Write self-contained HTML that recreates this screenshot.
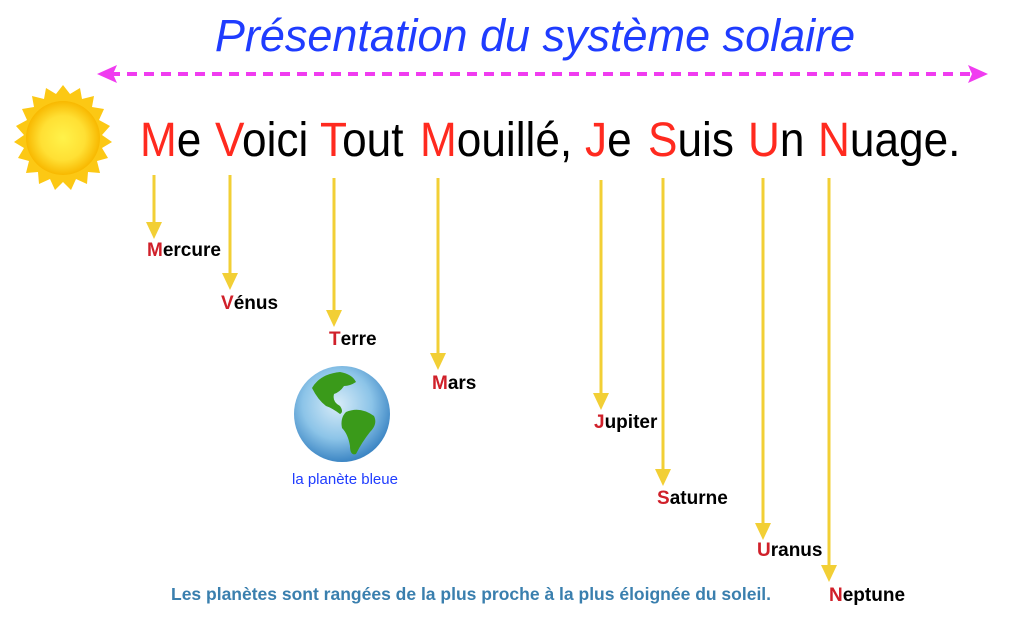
<!DOCTYPE html>
<html><head><meta charset="utf-8"><style>
body{margin:0;width:1013px;height:621px;background:#fff;position:relative;overflow:hidden;font-family:"Liberation Sans",sans-serif}
.a{position:absolute;white-space:nowrap}
.t{top:10px;left:0;width:1070px;text-align:center;font-style:italic;font-size:45px;color:#1f3cff}
.w{top:111px;font-size:48px;color:#000;line-height:60px;transform:scaleX(0.92);transform-origin:left}
.w b{font-weight:normal;color:#ff2a1f}
.p{font-size:19px;font-weight:bold;color:#000;line-height:20px}
.p b{color:#d0202a}
</style></head><body>
<div class="a t">Présentation du système solaire</div>
<svg class="a" style="left:0;top:0" width="1013" height="621">
<defs>
<radialGradient id="sg" cx="50%" cy="50%" r="50%"><stop offset="0" stop-color="#fff24a"/><stop offset="0.6" stop-color="#ffe034"/><stop offset="1" stop-color="#f8b800"/></radialGradient>
<radialGradient id="eg" cx="45%" cy="40%" r="60%"><stop offset="0" stop-color="#d8ecf8"/><stop offset="0.6" stop-color="#8cc4e8"/><stop offset="1" stop-color="#3d86c4"/></radialGradient>
</defs>
<line x1="110" y1="74" x2="975" y2="74" stroke="#f03cf0" stroke-width="4" stroke-dasharray="10,7"/>
<polygon points="97,74 117,65 113,74 117,83" fill="#f03cf0"/>
<polygon points="988,74 968,65 972,74 968,83" fill="#f03cf0"/>
<g transform="translate(63,138)">
<polygon fill="#fcc814" points="0,-53 7,-44 17,-50 19,-39 31,-42 29,-31 41,-29 36,-18 47,-12 39,-3 49,4 39,10 45,20 34,23 37,35 25,34 24,46 13,41 8,52 0,44 -8,52 -13,41 -24,46 -25,34 -37,35 -34,23 -45,20 -39,10 -49,4 -39,-3 -47,-12 -36,-18 -41,-29 -29,-31 -31,-42 -19,-39 -17,-50 -7,-44"/>
<circle r="37" fill="url(#sg)"/>
</g>
<g stroke="#f2cf35" stroke-width="3" fill="#f2cf35">
<line x1="154" y1="175" x2="154" y2="225"/><polygon stroke="none" points="146,222 162,222 154,239"/>
<line x1="230" y1="175" x2="230" y2="276"/><polygon stroke="none" points="222,273 238,273 230,290"/>
<line x1="334" y1="178" x2="334" y2="313"/><polygon stroke="none" points="326,310 342,310 334,327"/>
<line x1="438" y1="178" x2="438" y2="356"/><polygon stroke="none" points="430,353 446,353 438,370"/>
<line x1="601" y1="180" x2="601" y2="396"/><polygon stroke="none" points="593,393 609,393 601,410"/>
<line x1="663" y1="178" x2="663" y2="472"/><polygon stroke="none" points="655,469 671,469 663,486"/>
<line x1="763" y1="178" x2="763" y2="526"/><polygon stroke="none" points="755,523 771,523 763,540"/>
<line x1="829" y1="178" x2="829" y2="568"/><polygon stroke="none" points="821,565 837,565 829,582"/>
</g>
<circle cx="342" cy="414" r="48" fill="url(#eg)"/>
<path d="M312,388 q8,-14 28,-16 q12,2 16,10 q-6,4 -12,4 q-4,6 -10,8 q-2,8 6,12 q4,6 0,8 q-8,-6 -14,-8 q-8,-6 -14,-18z" fill="#3a9a1a"/>
<path d="M346,412 q14,-6 28,4 q4,8 -4,16 q-8,10 -14,22 q-6,2 -6,-8 q-2,-12 -8,-18 q-2,-10 4,-16z" fill="#3a9a1a"/>
</svg>
<div class="a w" style="left:140px"><b>M</b>e</div>
<div class="a w" style="left:215px"><b>V</b>oici</div>
<div class="a w" style="left:320px"><b>T</b>out</div>
<div class="a w" style="left:420px"><b>M</b>ouillé,</div>
<div class="a w" style="left:585px"><b>J</b>e</div>
<div class="a w" style="left:648px"><b>S</b>uis</div>
<div class="a w" style="left:748px"><b>U</b>n</div>
<div class="a w" style="left:818px"><b>N</b>uage.</div>
<div class="a p" style="left:147px;top:241px"><b>M</b>ercure</div>
<div class="a p" style="left:221px;top:294px"><b>V</b>énus</div>
<div class="a p" style="left:329px;top:330px"><b>T</b>erre</div>
<div class="a p" style="left:432px;top:374px"><b>M</b>ars</div>
<div class="a p" style="left:594px;top:413px"><b>J</b>upiter</div>
<div class="a p" style="left:657px;top:489px"><b>S</b>aturne</div>
<div class="a p" style="left:757px;top:541px"><b>U</b>ranus</div>
<div class="a p" style="left:829px;top:586px"><b>N</b>eptune</div>
<div class="a" style="left:292px;top:471px;font-size:15px;color:#1f3cff">la planète bleue</div>
<div class="a" style="left:171px;top:584px;font-size:17.5px;font-weight:bold;color:#3a7fae">Les planètes sont rangées de la plus proche à la plus éloignée du soleil.</div>
</body></html>
